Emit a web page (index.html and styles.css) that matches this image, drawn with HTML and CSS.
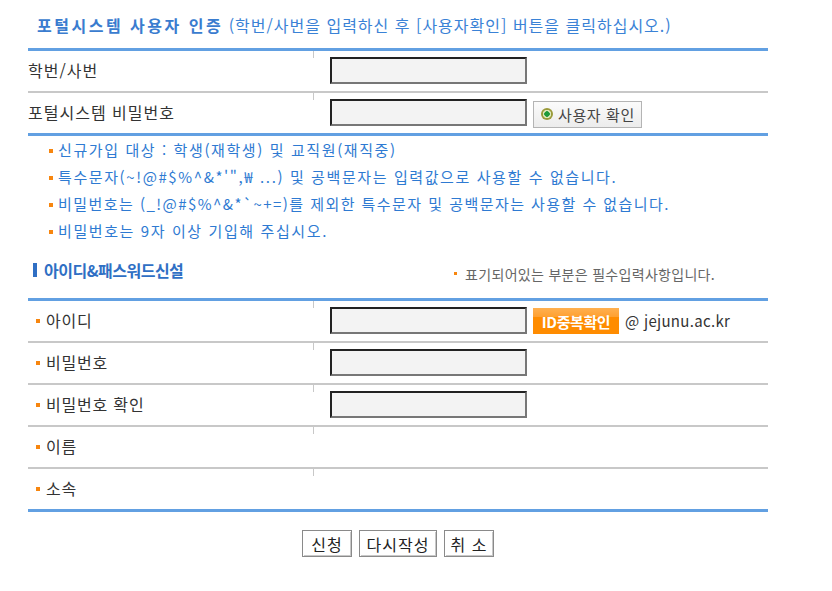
FILE: index.html
```html
<!DOCTYPE html>
<html lang="ko">
<head>
<meta charset="utf-8">
<link rel="stylesheet" href="styles.css">
</head>
<body>
<div class="page">
  <h1 class="title"><strong>포털시스템 사용자 인증</strong> (학번/사번을 입력하신 후 [사용자확인] 버튼을 클릭하십시오.)</h1>

  <div class="table">
    <div class="row">
      <div class="label">학번/사번</div>
      <div class="field"><span class="input"></span></div>
    </div>
    <div class="row">
      <div class="label">포털시스템 비밀번호</div>
      <div class="field">
        <span class="input"></span>
        <button class="btn-confirm"><span class="dot"></span>사용자 확인</button>
      </div>
    </div>
  </div>

  <ul class="notes">
    <li>신규가입 대상 : 학생(재학생) 및 교직원(재직중)</li>
    <li>특수문자(~!@#$%^&amp;*'",₩ ...) 및 공백문자는 입력값으로 사용할 수 없습니다.</li>
    <li class="tight">비밀번호는 (_!@#$%^&amp;*`~+=)를 제외한 특수문자 및 공백문자는 사용할 수 없습니다.</li>
    <li>비밀번호는 9자 이상 기입해 주십시오.</li>
  </ul>

  <div class="section-head">
    <h2 class="section-title">아이디&amp;패스워드신설</h2>
    <p class="required-note">표기되어있는 부분은 필수입력사항입니다.</p>
  </div>

  <div class="table">
    <div class="row">
      <div class="label req">아이디</div>
      <div class="field">
        <span class="input"></span>
        <button class="btn-id">ID중복확인</button>
        <span class="domain">@ jejunu.ac.kr</span>
      </div>
    </div>
    <div class="row">
      <div class="label req">비밀번호</div>
      <div class="field"><span class="input"></span></div>
    </div>
    <div class="row">
      <div class="label req">비밀번호 확인</div>
      <div class="field"><span class="input"></span></div>
    </div>
    <div class="row">
      <div class="label req">이름</div>
      <div class="field"></div>
    </div>
    <div class="row">
      <div class="label req">소속</div>
      <div class="field"></div>
    </div>
  </div>

  <div class="actions">
    <button class="btn">신청</button>
    <button class="btn btn-wide">다시작성</button>
    <button class="btn">취 소</button>
  </div>
</div>
</body>
</html>
```

FILE: styles.css
```css
* { box-sizing: border-box; }
html, body { margin: 0; padding: 0; background: #fff; }
body {
  font-family: "Noto Sans CJK KR", "Liberation Sans", sans-serif;
  color: #333;
}
.page {
  width: 740px;
  margin-left: 28px;
}
.title {
  margin: 0;
  height: 48px;
  padding: 14px 0 0 9px;
  font-size: 16px;
  font-weight: normal;
  line-height: 22px;
  color: #3a82d6;
  white-space: nowrap;
  letter-spacing: 1px;
}
.title strong { font-weight: bold; color: #3a7ccf; letter-spacing: 2.5px; }

.table {
  border-top: 3px solid #62a0e2;
  border-bottom: 3px solid #62a0e2;
}
.row {
  display: grid;
  grid-template-columns: 285px 1fr;
  height: 42px;
  border-bottom: 2px solid #c8c8c8;
}
.row:last-child { border-bottom: none; height: 40px; }
.label {
  display: flex;
  align-items: center;
  font-size: 16px;
  color: #333;
  padding-bottom: 3px;
  letter-spacing: 1px;
}
.label.req { padding-left: 8px; letter-spacing: 0.8px; }
.label.req::before {
  content: "";
  width: 4px;
  height: 4px;
  background: #f7860f;
  margin-right: 6px;
  margin-top: 3px;
}
.field {
  position: relative;
  display: flex;
  align-items: center;
  gap: 6px;
  padding-left: 17px;
  padding-bottom: 2px;
}
.field::before {
  content: "";
  position: absolute;
  left: 0;
  top: 0;
  width: 1px;
  height: 7px;
  background: #c8c8c8;
}
.input {
  display: block;
  width: 197px;
  height: 27px;
  background: #f3f3f3;
  border: 2px solid;
  border-color: #222 #777 #777 #222;
}
.btn-confirm {
  display: flex;
  align-items: center;
  height: 27px;
  width: 109px;
  margin-top: 4px;
  padding: 0 0 0 7px;
  border: 1px solid #b4b4b4;
  background: linear-gradient(#fbfbfb, #ececec);
  font-family: inherit;
  font-size: 15px;
  color: #444;
  letter-spacing: 0.6px;
  white-space: nowrap;
}
.dot {
  flex: none;
  width: 12px;
  height: 12px;
  border-radius: 50%;
  background: radial-gradient(circle, #1e9a3a 0 2.5px, #dde8b8 3px 4px, #9a9a3a 4.5px);
  margin-right: 5px;
}
.btn-id {
  height: 26px;
  width: 86px;
  margin-top: 2px;
  padding: 0;
  border: none;
  background: linear-gradient(#ffb050 0, #ffa030 35%, #ff8c00 36%, #ff8c00 100%);
  color: #fff;
  font-family: inherit;
  font-size: 15px;
  font-weight: bold;
  letter-spacing: -0.4px;
  white-space: nowrap;
}
.domain {
  font-size: 15px;
  color: #333;
  letter-spacing: 0.3px;
}

.notes {
  list-style: none;
  margin: 0;
  padding: 0 0 11px 21px;
}
.notes li {
  display: flex;
  align-items: center;
  height: 27px;
  font-size: 15px;
  color: #2e7ad2;
  white-space: nowrap;
  letter-spacing: 1.6px;
}
.notes li.tight { letter-spacing: 1.45px; }
.notes li::before {
  content: "";
  width: 4px;
  height: 4px;
  background: #f7860f;
  margin-right: 5px;
  margin-top: 2px;
}

.section-head {
  display: flex;
  align-items: center;
  justify-content: space-between;
  height: 43px;
  padding: 0 53px 0 5px;
}
.section-title {
  display: flex;
  align-items: center;
  margin: 0 0 14px 0;
  font-size: 16px;
  font-weight: bold;
  color: #2f6fc4;
  letter-spacing: -0.5px;
}
.section-title::before {
  content: "";
  width: 4px;
  height: 14px;
  background: #2f6fc4;
  margin-right: 7px;
}
.required-note {
  display: flex;
  align-items: center;
  margin: 0 0 6px 0;
  font-size: 14px;
  color: #666;
  letter-spacing: 0.3px;
}
.required-note::before {
  content: "";
  width: 3px;
  height: 3px;
  background: #f7860f;
  margin-right: 8px;
}

.actions {
  display: flex;
  justify-content: center;
  gap: 7px;
  margin-top: 18px;
}
.btn {
  height: 27px;
  width: 50px;
  padding: 0;
  border: 1px solid #8a8a8a;
  box-shadow: inset 1px 1px 0 #fff, inset -1px -1px 0 #c8c8c8;
  background: #fff;
  font-family: inherit;
  font-size: 16px;
  color: #222;
  letter-spacing: 1px;
  white-space: nowrap;
}
.btn-wide { width: 78px; }
```
